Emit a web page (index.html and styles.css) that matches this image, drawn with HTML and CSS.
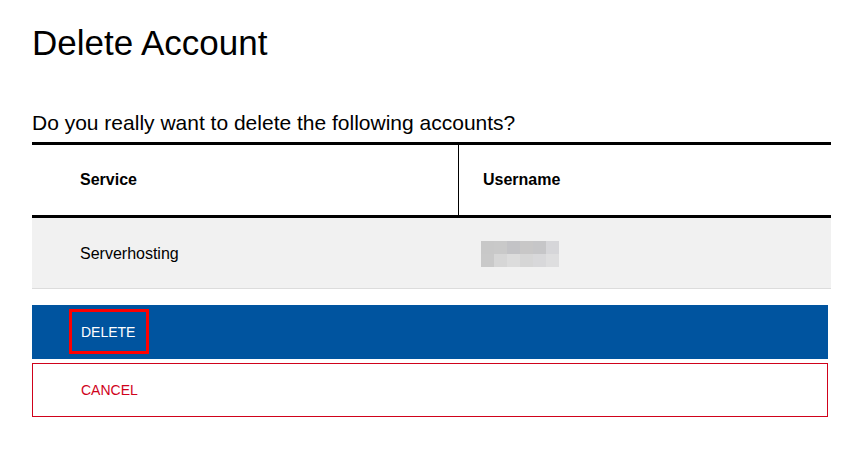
FILE: index.html
```html
<!DOCTYPE html>
<html lang="en">
<head>
<meta charset="utf-8">
<title>Delete Account</title>
<link rel="stylesheet" href="styles.css">
</head>
<body>
<main class="page">
  <h1 class="title">Delete Account</h1>
  <p class="question">Do you really want to delete the following accounts?</p>
  <table class="accounts">
    <thead>
      <tr>
        <th class="col-service">Service</th>
        <th class="col-user">Username</th>
      </tr>
    </thead>
    <tbody>
      <tr>
        <td class="col-service">Serverhosting</td>
        <td class="col-user"><span class="blurred" aria-label="hidden username"></span></td>
      </tr>
    </tbody>
  </table>
  <div class="actions">
    <button class="btn btn-delete" type="button"><span class="focus-mark"></span>DELETE</button>
    <button class="btn btn-cancel" type="button">CANCEL</button>
  </div>
</main>
</body>
</html>
```

FILE: styles.css
```css
html, body {
  margin: 0;
  padding: 0;
  background: #ffffff;
}

body {
  font-family: "Liberation Sans", Arial, sans-serif;
  color: #000000;
}

.page {
  padding: 23px 31px 0 32px;
}

.title {
  margin: 0;
  font-size: 35px;
  line-height: 40px;
  font-weight: 400;
}

.question {
  margin: 48px 0 7px 0;
  font-size: 21px;
  line-height: 24px;
}

.accounts {
  width: 100%;
  border-collapse: separate;
  border-spacing: 0;
  table-layout: fixed;
}

.accounts th,
.accounts td {
  box-sizing: border-box;
  height: 70px;
  text-align: left;
  vertical-align: middle;
  font-size: 16px;
  line-height: 18px;
  padding: 0;
}

.accounts th {
  font-weight: 700;
  border-top: 3px solid #000000;
  border-bottom: 3px solid #000000;
  height: 76px;
}

.accounts .col-service {
  width: 426px;
  padding-left: 48px;
}

.accounts th.col-user {
  border-left: 1px solid #000000;
  padding-left: 24px;
}

.accounts td {
  background: #f1f1f1;
  border-bottom: 1px solid #dcdcdc;
  height: 71px;
  padding-top: 1px;
}

.accounts td.col-user {
  padding-left: 23px;
}

.blurred {
  display: block;
  width: 78px;
  height: 26px;
  margin-top: 1px;
  background:
    linear-gradient(to right,
      #c8c8c8 0 13px, #c9c9c9 13px 26px, #c3c3c6 26px 39px,
      #c8c7c7 39px 52px, #c6c6c8 52px 65px, #d6d6d9 65px 78px) top / 78px 13px no-repeat,
    linear-gradient(to right,
      #c9c9c9 0 13px, #d6d6d6 13px 26px, #dcdcdc 26px 39px,
      #d6d6d6 39px 52px, #d8d8da 52px 65px, #dededf 65px 78px) bottom / 78px 13px no-repeat;
}

.actions {
  display: flex;
  flex-direction: column;
  gap: 4px;
  margin: 16px 3px 0 0;
}

.btn {
  box-sizing: border-box;
  display: flex;
  align-items: center;
  width: 100%;
  height: 54px;
  margin: 0;
  padding: 0 0 0 49px;
  font-family: "Liberation Sans", Arial, sans-serif;
  font-size: 14px;
  line-height: 16px;
  text-align: left;
  cursor: pointer;
}

.btn-delete {
  position: relative;
  background: #00549f;
  color: #ffffff;
  border: none;
}

.focus-mark {
  position: absolute;
  left: 37px;
  top: 4px;
  width: 80px;
  height: 45px;
  box-sizing: border-box;
  border: 3px solid #ff0000;
}

.btn-cancel {
  background: #ffffff;
  color: #d0021b;
  border: 1px solid #d0021b;
  padding-left: 48px;
}
```
